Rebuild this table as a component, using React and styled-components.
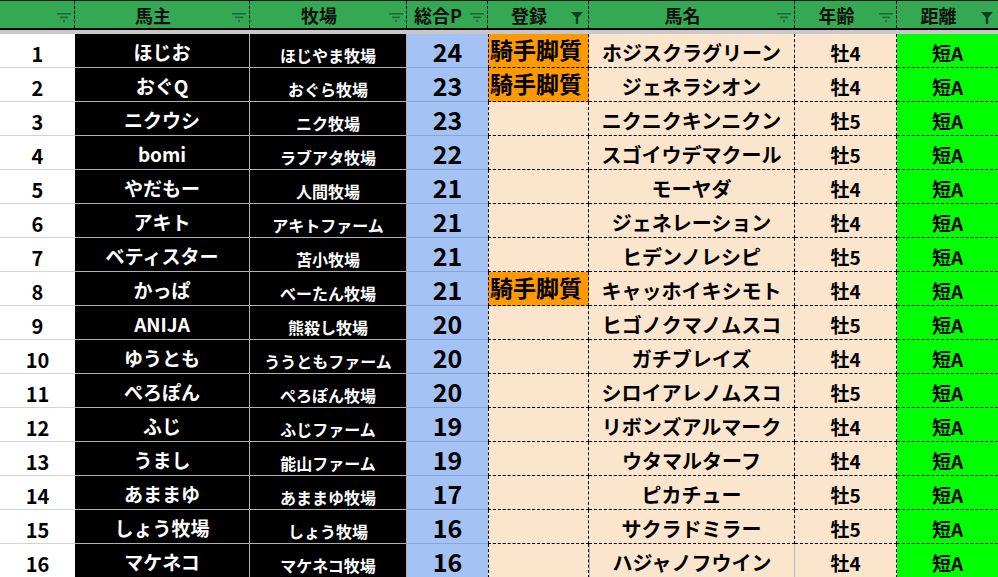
import React from 'react';
import styled, { createGlobalStyle, css } from 'styled-components';

const COLUMNS = '75px 175px 157px 81px 101px 206px 102px 101px';

const HEADERS = [
  { label: '', filter: 'lines' },
  { label: '馬主', filter: 'lines' },
  { label: '牧場', filter: 'lines' },
  { label: '総合P', filter: 'lines' },
  { label: '登録', filter: 'funnel' },
  { label: '馬名', filter: 'lines' },
  { label: '年齢', filter: 'lines' },
  { label: '距離', filter: 'funnel', last: true },
];

const ROWS = [
  ['ほじお', 'ほじやま牧場', 24, true, 'ホジスクラグリーン', '牡4'],
  ['おぐQ', 'おぐら牧場', 23, true, 'ジェネラシオン', '牡4'],
  ['ニクウシ', 'ニク牧場', 23, false, 'ニクニクキンニクン', '牡5'],
  ['bomi', 'ラブアタ牧場', 22, false, 'スゴイウデマクール', '牡5'],
  ['やだもー', '人間牧場', 21, false, 'モーヤダ', '牡4'],
  ['アキト', 'アキトファーム', 21, false, 'ジェネレーション', '牡4'],
  ['ベティスター', '苫小牧場', 21, false, 'ヒデンノレシピ', '牡5'],
  ['かっぱ', 'べーたん牧場', 21, true, 'キャッホイキシモト', '牡4'],
  ['ANIJA', '熊殺し牧場', 20, false, 'ヒゴノクマノムスコ', '牡5'],
  ['ゆうとも', 'ううともファーム', 20, false, 'ガチブレイズ', '牡4'],
  ['ぺろぽん', 'ぺろぽん牧場', 20, false, 'シロイアレノムスコ', '牡5'],
  ['ふじ', 'ふじファーム', 19, false, 'リボンズアルマーク', '牡4'],
  ['うまし', '能山ファーム', 19, false, 'ウタマルターフ', '牡4'],
  ['あままゆ', 'あままゆ牧場', 17, false, 'ピカチュー', '牡5'],
  ['しょう牧場', 'しょう牧場', 16, false, 'サクラドミラー', '牡5'],
  ['マケネコ', 'マケネコ牧場', 16, false, 'ハジャノフウイン', '牡4'],
];

const LinesIcon = () => (
  <svg width="14" height="9" viewBox="0 0 14 9">
    <rect x="0" y="0" width="14" height="1.6" fill="#1d6a37" />
    <rect x="3" y="3.6" width="8" height="1.6" fill="#1d6a37" />
    <rect x="6" y="7.2" width="2" height="1.6" fill="#1d6a37" />
  </svg>
);

const FunnelIcon = () => (
  <svg width="12" height="12" viewBox="0 0 12 12">
    <path d="M0 0 H12 L7.2 5.2 V12 H4.8 V5.2 Z" fill="#0f3d1f" />
  </svg>
);

const App = () => {
  return (
    <>
      <GlobalStyle />
      <Sheet>
        <HeaderRow>
          {HEADERS.map((h, i) => (
            <HeaderCell key={i} $last={h.last}>
              <HeaderLabel>{h.label}</HeaderLabel>
              <FilterSlot $funnel={h.filter === 'funnel'}>
                {h.filter === 'funnel' ? <FunnelIcon /> : <LinesIcon />}
              </FilterSlot>
            </HeaderCell>
          ))}
        </HeaderRow>
        <Band />
        <Body>
          {ROWS.map(([owner, farm, points, jockey, horse, age], i) => (
            <React.Fragment key={i}>
              <NumberCell>{i + 1}</NumberCell>
              <DarkCell $size={19} $dy={2}>{owner}</DarkCell>
              <DarkCell $size={16} $dy={5}>{farm}</DarkCell>
              <PointCell>{points}</PointCell>
              <EntryCell $marked={jockey}>{jockey ? '騎手脚質' : ''}</EntryCell>
              <PeachCell $size={20} $dy={2} $selected={i === ROWS.length - 1}>{horse}</PeachCell>
              <PeachCell $size={19} $dy={3}>{age}</PeachCell>
              <DistanceCell>短A</DistanceCell>
            </React.Fragment>
          ))}
        </Body>
      </Sheet>
    </>
  );
};

const GlobalStyle = createGlobalStyle`
  html, body {
    margin: 0;
    padding: 0;
    background: #ffffff;
  }
  body {
    font-family: "Noto Sans CJK JP", "Noto Sans", sans-serif;
    font-weight: 700;
    color: #000000;
    overflow: hidden;
  }
`;

const Sheet = styled.div`
  width: 998px;
  height: 577px;
  overflow: hidden;
`;

const HeaderRow = styled.div`
  display: grid;
  grid-template-columns: ${COLUMNS};
  height: 30px;
  box-sizing: border-box;
  background: #34a853;
  border-top: 1px solid #1a1a1a;
  border-bottom: 2px solid #000000;
`;

const HeaderCell = styled.div`
  position: relative;
  display: flex;
  align-items: center;
  justify-content: center;
  box-sizing: border-box;
  padding-right: 18px;
  border-right: ${p => (p.$last ? 'none' : '1px dashed #000000')};
`;

const HeaderLabel = styled.span`
  font-size: 18px;
  line-height: 1;
  color: #111111;
`;

const FilterSlot = styled.span`
  position: absolute;
  right: ${p => (p.$funnel ? '5px' : '3px')};
  top: ${p => (p.$funnel ? '11px' : '12px')};
  display: flex;
`;

const Band = styled.div`
  height: 4px;
  background: #c8c8c8;
`;

const Body = styled.div`
  display: grid;
  grid-template-columns: ${COLUMNS};
  grid-auto-rows: 34px;
`;

const cellBase = css`
  display: flex;
  align-items: center;
  justify-content: center;
  box-sizing: border-box;
  line-height: 1.2;
  white-space: nowrap;
`;

const shift = dy => css`
  padding-top: ${Math.max(dy, 0) * 2}px;
  padding-bottom: ${Math.max(-dy, 0) * 2}px;
`;

const NumberCell = styled.div`
  ${cellBase};
  ${shift(3)};
  font-size: 20px;
  background: #ffffff;
  border-bottom: 1px solid #d4d4d4;
`;

const DarkCell = styled.div`
  ${cellBase};
  ${p => shift(p.$dy)};
  font-size: ${p => p.$size}px;
  color: #ffffff;
  background: #000000;
  border-right: 1px solid #b0b0b0;
  border-bottom: 1px solid #b0b0b0;
`;

const PointCell = styled.div`
  ${cellBase};
  ${shift(0)};
  font-size: 25px;
  background: #a4c2f4;
  border-bottom: 1px solid #86a6da;
`;

const EntryCell = styled.div`
  ${cellBase};
  ${shift(-1)};
  justify-content: flex-start;
  padding-left: 1px;
  font-size: 23px;
  background: ${p => (p.$marked ? '#ff9900' : '#fce5cd')};
  border-left: 1px dashed #000000;
  border-right: 1px dashed #000000;
  border-bottom: 1px dashed #000000;
`;

const PeachCell = styled.div`
  ${cellBase};
  ${p => shift(p.$dy)};
  font-size: ${p => p.$size}px;
  background: #fce5cd;
  border-right: 1px dashed #000000;
  border-bottom: 1px dashed #000000;
  ${p =>
    p.$selected &&
    css`
      border: 1px solid #b4b4b4;
      border-top: none;
    `}
`;

const DistanceCell = styled.div`
  ${cellBase};
  ${shift(3)};
  font-size: 19px;
  background: #00ff00;
  border-bottom: 1px dashed #000000;
`;

export default App;
